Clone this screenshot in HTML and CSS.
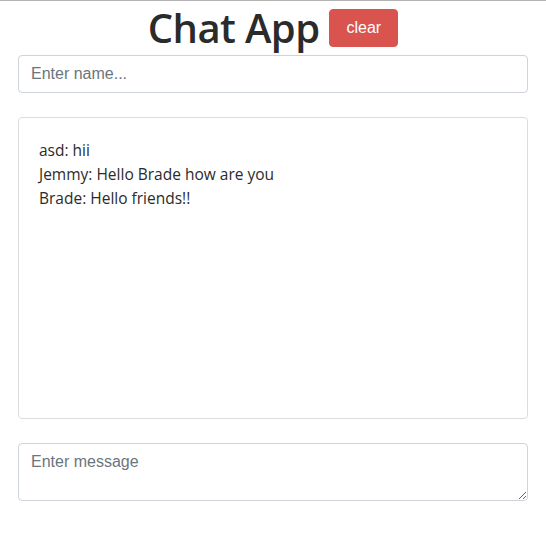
FILE: index.html
```html
<!DOCTYPE html>
<html lang="en">
<head>
<meta charset="utf-8">
<title>Chat App</title>
<link rel="stylesheet" href="styles.css">
</head>
<body>
<div class="topline"></div>
<main class="container">
  <header class="header">
    <h1 class="title">Chat App</h1>
    <button class="btn-clear" type="button">clear</button>
  </header>
  <input class="field name-field" type="text" placeholder="Enter name...">
  <div class="messages">
    <div class="msg">asd: hii</div>
    <div class="msg">Jemmy: Hello Brade how are you</div>
    <div class="msg">Brade: Hello friends!!</div>
  </div>
  <textarea class="field message-field" placeholder="Enter message"></textarea>
</main>
</body>
</html>
```
FILE: styles.css
```css
* { box-sizing: border-box; }
html, body { margin: 0; padding: 0; background: #fff; }
body { font-family: "Open Sans", "Liberation Sans", sans-serif; color: #212529; }
.topline { border-top: 1px solid #b4b4b4; }
.container { padding: 0 18px; display: flex; flex-direction: column; }
.header { display: flex; justify-content: center; align-items: center; gap: 10px; height: 52px; padding-top: 2px; }
.title { margin: 0; font-family: "Open Sans", sans-serif; font-weight: 600; font-size: 40px; line-height: 48px; letter-spacing: -0.6px; color: #2b2b2b; }
.btn-clear { font-family: "Liberation Sans", Arial, sans-serif; font-size: 16px; line-height: 24px; padding: 6px 16px; border: 1px solid #d9534f; background: #d9534f; color: #fff; border-radius: 4px; }
.field { display: block; width: 100%; font-family: "Liberation Sans", Arial, sans-serif; font-size: 16px; line-height: 24px; color: #495057; background: #fff; border: 1px solid #ced4da; border-radius: 4px; padding: 6px 12px; }
.field::placeholder { color: #6c757d; opacity: 1; }
.name-field { height: 38px; margin-top: 2px; }
.messages { margin-top: 24px; height: 302px; border: 1px solid #dcdcdc; border-radius: 4px; padding: 20px 20px; font-family: "Open Sans", sans-serif; font-size: 15.5px; line-height: 24px; color: #2b2b2b; }
.message-field { margin-top: 24px; height: 58px; resize: vertical; padding-top: 6px; }
```
